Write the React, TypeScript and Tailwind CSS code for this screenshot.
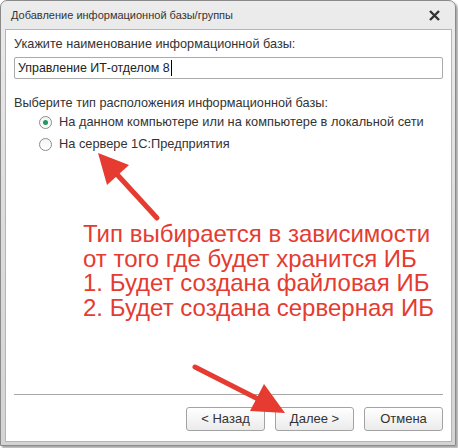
import React from "react";

function Radio({ checked }: { checked?: boolean }) {
  return (
    <div className="w-[13px] h-[13px] rounded-full border border-[#8c8c8c] bg-gradient-to-b from-[#f4f4f4] to-white flex items-center justify-center">
      {checked && <div className="w-[5px] h-[5px] rounded-full bg-[#1f9a5a]" />}
    </div>
  );
}

function Btn({ children }: { children: React.ReactNode }) {
  return (
    <div className="w-[79px] h-[24px] rounded-[3px] border border-[#a3a3a3] bg-gradient-to-b from-white to-[#ebebeb] flex items-center justify-center text-[13px] text-[#333]">
      {children}
    </div>
  );
}

export default function App() {
  return (
    <div
      className="w-[458px] h-[448px] bg-white relative overflow-hidden"
      style={{ fontFamily: '"Liberation Sans", Arial, sans-serif' }}
    >
      <div className="w-[456px] h-[446px] rounded-t-[7px] border border-[#8a8a8a] bg-gradient-to-b from-[#ececec] via-[#dcdcdc] to-[#d4d4d4] shadow-[2px_2px_2px_rgba(0,0,0,0.35)] flex flex-col">
        <div className="h-[28px] flex items-center justify-between pl-[10px] pr-[15px] shrink-0">
          <span className="text-[11px] text-[#333] leading-none">Добавление информационной базы/группы</span>
          <svg width="11" height="11" viewBox="0 0 11 11">
            <path d="M1 1 L10 10 M10 1 L1 10" stroke="#333" strokeWidth="2.4" />
          </svg>
        </div>
        <div className="ml-[4px] mr-[3px] mb-[3px] flex-1 bg-white border border-[#b5b5b5] flex flex-col px-[8px] text-[#333] text-[12.7px]">
          <div className="mt-[6px] leading-[16px]">Укажите наименование информационной базы:</div>
          <div className="mt-[5px] h-[22px] border border-[#aaaaaa] rounded-[2px] flex items-center pl-[3px]">
            <span className="text-[#222] text-[12.4px]">Управление ИТ-отделом 8</span>
            <span className="ml-[1px] w-[1px] h-[16px] bg-black" />
          </div>
          <div className="mt-[16px] leading-[16px]">Выберите тип расположения информационной базы:</div>
          <div className="mt-[0px] ml-[25px] flex items-center gap-[7px] h-[22px]">
            <Radio checked />
            <span className="text-[12.8px]">На данном компьютере или на компьютере в локальной сети</span>
          </div>
          <div className="ml-[25px] flex items-center gap-[7px] h-[22px]">
            <Radio />
            <span className="text-[12.8px]">На сервере 1С:Предприятия</span>
          </div>
          <div className="mt-[67px] ml-[69px] text-[24px] leading-[24.7px] text-[#e53b30]">
            <div>Тип выбирается в зависимости</div>
            <div>от того где будет хранится ИБ</div>
            <div>1. Будет создана файловая ИБ</div>
            <div>2. Будет создана серверная ИБ</div>
          </div>
          <div className="flex-1" />
          <div className="h-[1px] bg-[#a8a8a8]" />
          <div className="mt-[12px] mb-[10px] flex justify-end gap-[10px]">
            <Btn>&lt; Назад</Btn>
            <Btn>Далее &gt;</Btn>
            <Btn>Отмена</Btn>
          </div>
        </div>
      </div>
      <svg className="absolute left-0 top-0" width="458" height="448" viewBox="0 0 458 448">
        <line x1="157" y1="218" x2="113" y2="170" stroke="#e53b30" strokeWidth="5" strokeLinecap="round" />
        <polygon points="98,153 129,165 107,185" fill="#e53b30" />
        <line x1="195" y1="367" x2="262" y2="401" stroke="#e53b30" strokeWidth="5" strokeLinecap="round" />
        <polygon points="285,413 264,384 250,411" fill="#e53b30" />
      </svg>
    </div>
  );
}
